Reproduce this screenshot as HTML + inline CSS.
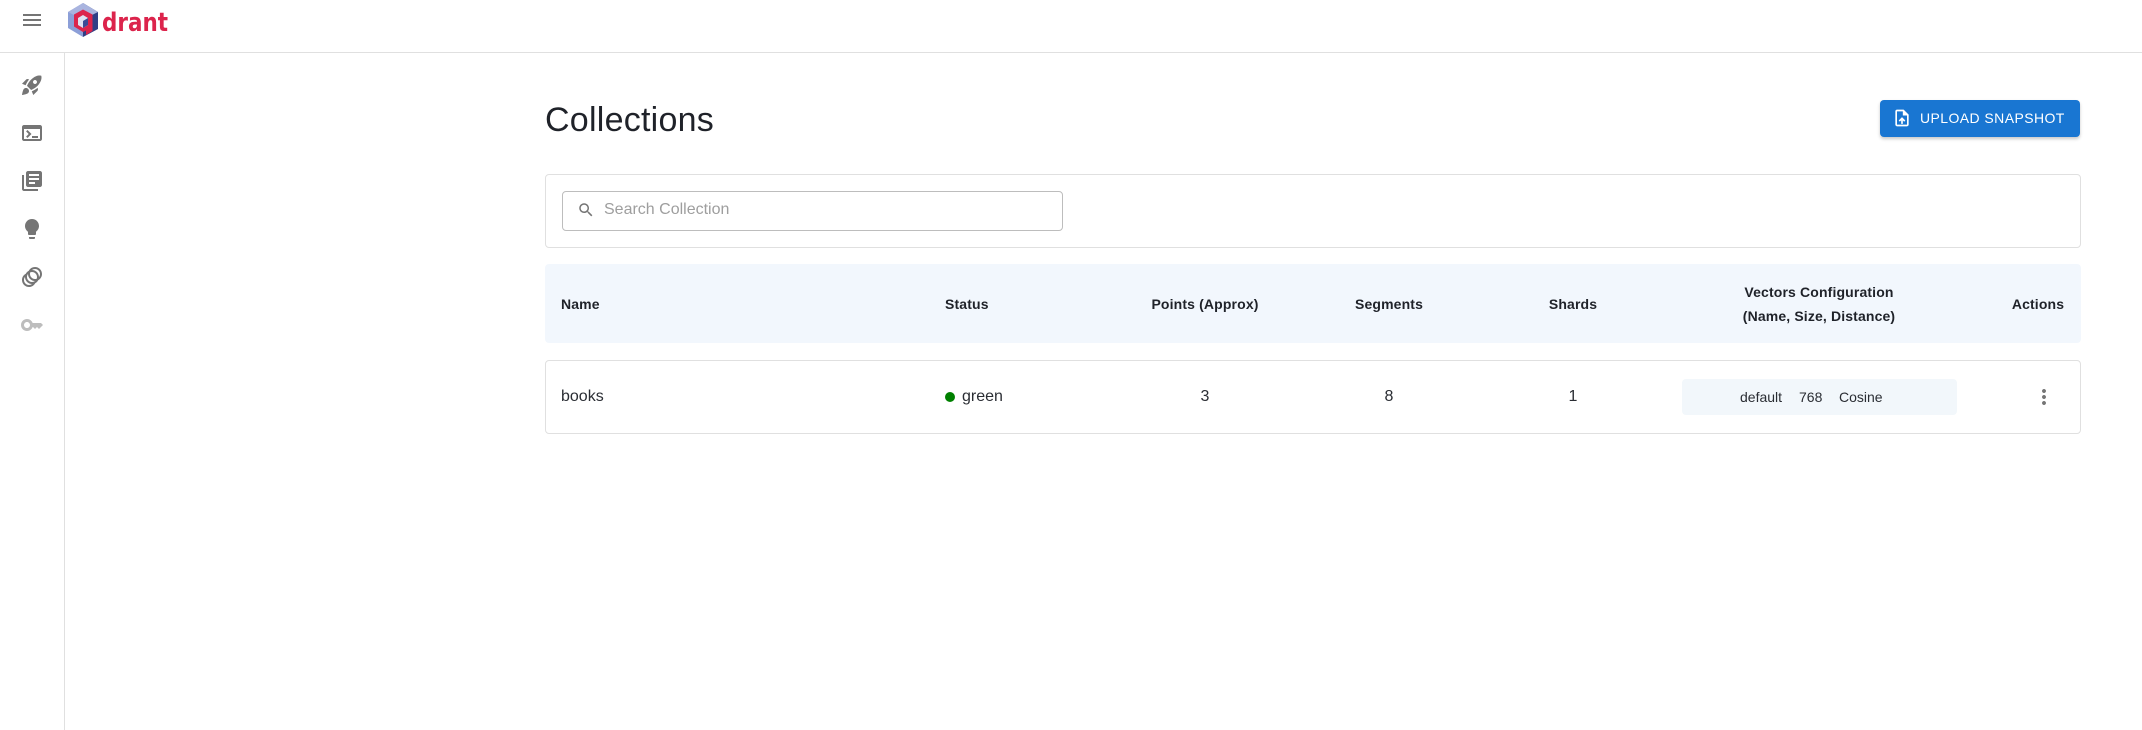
<!DOCTYPE html>
<html><head><meta charset="utf-8"><title>Collections</title>
<style>
html,body{margin:0;padding:0;width:2142px;height:730px;overflow:hidden;background:#fff;font-family:"Liberation Sans",sans-serif;color:#1f2229}
.a{position:absolute}
.t{position:absolute;white-space:nowrap;line-height:20px;height:20px}
.c{width:300px;text-align:center}
.h{font-weight:700;font-size:14px;letter-spacing:.14px;color:#1f2229}
.v{font-size:16px;color:#2a2d33}
svg.i{position:absolute;width:24px;height:24px;fill:#757575}
</style></head><body>
<div class="a" style="left:0;top:52px;width:2142px;height:1px;background:#e0e0e0"></div>
<div class="a" style="left:64px;top:52px;width:1px;height:678px;background:#e0e0e0"></div>

<svg class="i" style="left:20px;top:8px" viewBox="0 0 24 24"><path d="M3 18h18v-2H3v2zm0-5h18v-2H3v2zm0-7v2h18V6H3z"/></svg>

<svg class="a" style="left:66px;top:0" width="110" height="42" viewBox="0 0 110 42">
<polygon points="17,3 2,12 2,28 17,37 17,20" fill="#8c9fd8"/>
<polygon points="17,3 32,12 32,29 17,37 17,20" fill="#2f3f86"/>
<polygon points="17,3 32,12 26,15 17,10 8,15 2,12" fill="#a9b4df"/>
<path d="M8 14.500L17 9.500L26.500 14.500V31L20 35V30.500L17 32L8 26.500Z" fill="#dc244c"/>
<polygon points="17,15 22,18 22,25 17,28 12,25 12,18" fill="#dfe2f2"/>
<polygon points="17,21 22,18 22,25 17,28" fill="#3c4c96"/>
<text x="36" y="31" font-family="DejaVu Sans" font-weight="700" font-size="26" fill="#dc244c" textLength="66" lengthAdjust="spacingAndGlyphs">drant</text>
</svg>

<svg class="i" style="left:20px;top:73px" viewBox="0 0 24 24"><path d="M9.19 6.35c-2.04 2.29-3.44 5.58-3.57 5.89L2 10.69l4.05-4.05c.47-.47 1.15-.68 1.81-.55l1.33.26zM11.17 17s3.74-1.55 5.89-3.7c5.4-5.4 4.5-9.62 4.21-10.57-.95-.3-5.17-1.19-10.57 4.21C8.55 9.09 7 12.83 7 12.83L11.17 17zm6.48-2.19c-2.29 2.04-5.58 3.44-5.89 3.57L13.31 22l4.05-4.05c.47-.47.68-1.15.55-1.81l-.26-1.33zM9 18c0 .83-.34 1.58-.88 2.12C6.94 21.3 2 22 2 22s.7-4.94 1.88-6.12C4.42 15.34 5.17 15 6 15c1.66 0 3 1.34 3 3zm4-9c0-1.1.9-2 2-2s2 .9 2 2-.9 2-2 2-2-.9-2-2z"/></svg>
<svg class="i" style="left:20px;top:121px" viewBox="0 0 24 24"><path d="M20 4H4c-1.100 0-2 .9-2 2v12c0 1.100.9 2 2 2h16c1.100 0 2-.9 2-2V6c0-1.100-.9-2-2-2zm0 14H4V8h16v10zm-2-1h-6v-2h6v2zM7.500 17l-1.410-1.410L8.670 13l-2.590-2.590L7.500 9l4 4-4 4z"/></svg>
<svg class="i" style="left:20px;top:169px" viewBox="0 0 24 24"><path d="M4 6H2v14c0 1.100.9 2 2 2h14v-2H4V6zm16-4H8c-1.100 0-2 .9-2 2v12c0 1.100.9 2 2 2h12c1.100 0 2-.9 2-2V4c0-1.100-.9-2-2-2zm-1 9H9V9h10v2zm-4 4H9v-2h6v2zm4-8H9V5h10v2z"/></svg>
<svg class="i" style="left:20px;top:217px" viewBox="0 0 24 24"><path d="M9 21c0 .5.4 1 1 1h4c.6 0 1-.5 1-1v-1H9v1zm3-19C8.100 2 5 5.100 5 9c0 2.400 1.200 4.500 3 5.700V17c0 .5.4 1 1 1h6c.6 0 1-.5 1-1v-2.300c1.800-1.300 3-3.400 3-5.700 0-3.900-3.100-7-7-7z"/></svg>
<svg class="i" style="left:20px;top:265px" viewBox="0 0 24 24"><path d="M15 2c-2.710 0-5.050 1.540-6.220 3.780-1.280.67-2.340 1.720-3 3C3.540 9.950 2 12.290 2 15c0 3.870 3.130 7 7 7 2.710 0 5.050-1.540 6.220-3.780 1.280-.67 2.340-1.720 3-3C20.460 14.050 22 11.710 22 9c0-3.870-3.130-7-7-7zM9 20c-2.760 0-5-2.240-5-5 0-1.120.37-2.160 1-3 0 3.870 3.130 7 7 7-.84.63-1.880 1-3 1zm3-3c-2.760 0-5-2.240-5-5 0-1.120.37-2.160 1-3 0 3.860 3.130 6.990 7 7-.84.63-1.880 1-3 1zm4.700-3.300c-.53.19-1.100.3-1.700.3-2.760 0-5-2.240-5-5 0-.6.11-1.170.3-1.700.53-.19 1.100-.3 1.700-.3 2.760 0 5 2.240 5 5 0 .6-.11 1.170-.3 1.700zM19 12c0-3.860-3.130-6.990-7-7 .84-.63 1.870-1 3-1 2.760 0 5 2.240 5 5 0 1.120-.37 2.160-1 3z"/></svg>
<svg class="i" style="left:20px;top:313px;fill:#bdbdbd" viewBox="0 0 24 24"><path d="M21 10h-8.350C11.830 7.670 9.610 6 7 6c-3.310 0-6 2.690-6 6s2.690 6 6 6c2.610 0 4.830-1.670 5.650-4H13l2 2 2-2 2 2 4-4.040L21 10zM7 15c-1.650 0-3-1.350-3-3s1.350-3 3-3 3 1.350 3 3-1.350 3-3 3z"/></svg>

<div class="t" style="left:545px;top:103px;line-height:34px;height:34px;font-size:34px;letter-spacing:.25px;color:#1f2229">Collections</div>

<div class="a" style="left:1880px;top:100px;width:200px;height:37px;background:#1976d2;border-radius:4px;box-shadow:0 2px 3px rgba(0,0,0,.22)"></div>
<svg class="i" style="left:1892px;top:108px;fill:#fff;width:20px;height:20px" viewBox="0 0 24 24"><path d="M14 2H6c-1.100 0-1.990.9-1.990 2L4 20c0 1.100.89 2 1.990 2H18c1.100 0 2-.9 2-2V8l-6-6zm4 18H6V4h7v5h5v11zM8 15.010l1.410 1.410L11 14.840V19h2v-4.160l1.590 1.590L16 15.010 12.010 11 8 15.010z"/></svg>
<div class="t" style="left:1920px;top:108px;font-size:14px;letter-spacing:.42px;color:#fff">UPLOAD SNAPSHOT</div>

<div class="a" style="left:545px;top:174px;width:1534px;height:72px;border:1px solid #e0e0e0;border-radius:4px"></div>
<div class="a" style="left:562px;top:191px;width:499px;height:38px;border:1px solid #bdbdbd;border-radius:4px"></div>
<svg class="i" style="left:577px;top:201px;width:18px;height:18px" viewBox="0 0 24 24"><path d="M15.500 14h-.79l-.28-.27C15.410 12.590 16 11.110 16 9.500 16 5.910 13.090 3 9.500 3S3 5.910 3 9.500 5.910 16 9.500 16c1.610 0 3.090-.59 4.230-1.570l.27.28v.79l5 4.990L20.490 19l-4.990-5zm-6 0C7.010 14 5 11.990 5 9.500S7.010 5 9.500 5 14 7.010 14 9.500 11.990 14 9.500 14z"/></svg>
<div class="t" style="left:604px;top:200px;font-size:16px;color:#9e9e9e">Search Collection</div>

<div class="a" style="left:545px;top:264px;width:1536px;height:79px;background:#f2f7fd;border-radius:4px"></div>
<div class="t h" style="left:561px;top:293.500px">Name</div>
<div class="t h" style="left:945px;top:293.500px">Status</div>
<div class="t h c" style="left:1055px;top:293.500px">Points (Approx)</div>
<div class="t h c" style="left:1239px;top:293.500px">Segments</div>
<div class="t h c" style="left:1423px;top:293.500px">Shards</div>
<div class="t h c" style="left:1669px;top:282px">Vectors Configuration</div>
<div class="t h c" style="left:1669px;top:306px">(Name, Size, Distance)</div>
<div class="t h c" style="left:1888px;top:293.500px">Actions</div>

<div class="a" style="left:545px;top:360px;width:1534px;height:72px;border:1px solid #e0e0e0;border-radius:4px"></div>
<div class="t v" style="left:561px;top:387px">books</div>
<div class="a" style="left:945px;top:392px;width:10px;height:10px;border-radius:50%;background:#008000"></div>
<div class="t v" style="left:962px;top:387px">green</div>
<div class="t v c" style="left:1055px;top:387px">3</div>
<div class="t v c" style="left:1239px;top:387px">8</div>
<div class="t v c" style="left:1423px;top:387px">1</div>
<div class="a" style="left:1682px;top:379px;width:275px;height:36px;background:#f2f7fb;border-radius:4px"></div>
<div class="t" style="left:1740px;top:387px;font-size:14px;color:#2a2d33">default</div>
<div class="t" style="left:1799px;top:387px;font-size:14px;color:#2a2d33">768</div>
<div class="t" style="left:1839px;top:387px;font-size:14px;color:#2a2d33">Cosine</div>
<svg class="i" style="left:2032px;top:385px" viewBox="0 0 24 24"><path d="M12 8c1.100 0 2-.9 2-2s-.9-2-2-2-2 .9-2 2 .9 2 2 2zm0 2c-1.100 0-2 .9-2 2s.9 2 2 2 2-.9 2-2-.9-2-2-2zm0 6c-1.100 0-2 .9-2 2s.9 2 2 2 2-.9 2-2-.9-2-2-2z"/></svg>
</body></html>
